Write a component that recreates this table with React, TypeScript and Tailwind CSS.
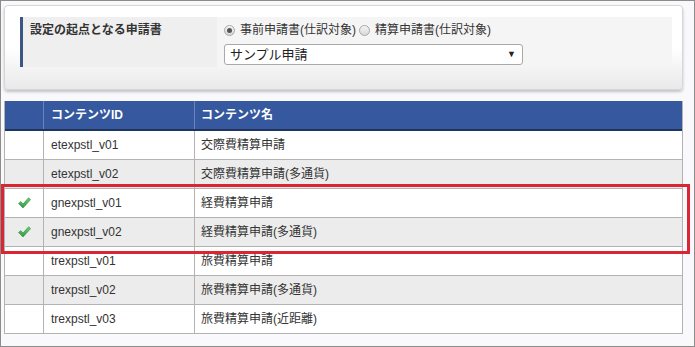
import React from "react";

const rows = [
  { id: "etexpstl_v01", name: "交際費精算申請", checked: false },
  { id: "etexpstl_v02", name: "交際費精算申請(多通貨)", checked: false },
  { id: "gnexpstl_v01", name: "経費精算申請", checked: true },
  { id: "gnexpstl_v02", name: "経費精算申請(多通貨)", checked: true },
  { id: "trexpstl_v01", name: "旅費精算申請", checked: false },
  { id: "trexpstl_v02", name: "旅費精算申請(多通貨)", checked: false },
  { id: "trexpstl_v03", name: "旅費精算申請(近距離)", checked: false },
];

function Check() {
  return (
    <svg width="13" height="12" viewBox="0 0 13 12">
      <defs>
        <linearGradient id="chk" x1="0" y1="0" x2="0" y2="1">
          <stop offset="0%" stopColor="#6fd07a" />
          <stop offset="100%" stopColor="#2e9a3e" />
        </linearGradient>
      </defs>
      <path
        d="M0.5 6.5 L2.8 4.6 L5 7 L10.6 0.8 L12.6 2.6 L5 11 Z"
        fill="url(#chk)"
        stroke="#2b8a38"
        strokeWidth="0.6"
        strokeLinejoin="round"
      />
    </svg>
  );
}

function Radio({ on }: { on: boolean }) {
  return (
    <span className="inline-flex h-[11px] w-[11px] items-center justify-center rounded-full border border-[#a8a8a8] bg-gradient-to-b from-[#f4f4f4] to-[#d9d9d9]">
      {on && <span className="h-[5px] w-[5px] rounded-full bg-[#555]" />}
    </span>
  );
}

export default function App() {
  return (
    <div
      className="relative box-border h-[347px] w-[695px] border border-[#8c8c8c] bg-[#f9f9fb] pl-[3px] pr-[11px] pt-[4px] text-[12px] text-[#333]"
      style={{ fontFamily: '"Liberation Sans", "Noto Sans CJK JP", sans-serif' }}
    >
      {/* condition panel */}
      <div className="box-border h-[85px] rounded-[4px] border border-[#d6d6d6] bg-gradient-to-b from-white via-white to-[#e9e9e9] pl-[15px] pr-[10px] pt-[11px] shadow-[0_2px_3px_rgba(0,0,0,0.22)]">
        <div className="flex h-[50px]">
          <div className="box-border w-[197px] border-l-[3px] border-[#3b5584] bg-[#efefef] pl-[7px] pt-[5px] font-bold leading-[16px]">
            設定の起点となる申請書
          </div>
          <div className="flex-1 bg-[#f5f5f5] pl-[7px] pt-[5px]">
            <div className="flex h-[16px] items-center leading-[16px]">
              <Radio on />
              <span className="ml-[5px]">事前申請書(仕訳対象)</span>
              <span className="ml-[3px] flex items-center">
                <Radio on={false} />
              </span>
              <span className="ml-[5px]">精算申請書(仕訳対象)</span>
            </div>
            <div className="mt-[6px] box-border flex h-[21px] w-[299px] items-center justify-between rounded-[3px] border border-[#a9a9a9] bg-white pl-[5px] pr-[6px] text-[13px] text-[#222]">
              <span>サンプル申請</span>
              <span className="text-[9px] text-[#222]">▼</span>
            </div>
          </div>
        </div>
      </div>

      {/* content table */}
      <div className="mt-[11px] border-x border-[#b3b3b3]">
        <div className="flex h-[30px] border-b-2 border-[#1f3560] bg-[#35589e] font-bold text-white">
          <div className="w-[39px] border-r border-[#6a84bb]" />
          <div className="flex w-[151px] items-center border-r border-[#6a84bb] pl-[7px]">
            コンテンツID
          </div>
          <div className="flex flex-1 items-center pl-[6px]">コンテンツ名</div>
        </div>
        {rows.map((r, i) => (
          <div
            key={r.id}
            className={`flex h-[29px] border-b border-[#b3b3b3] ${
              i % 2 === 1 ? "bg-[#ececec]" : "bg-white"
            }`}
          >
            <div className="flex w-[39px] items-center justify-center border-r border-[#b3b3b3]">
              {r.checked && <Check />}
            </div>
            <div className="flex w-[151px] items-center border-r border-[#b3b3b3] pl-[7px]">
              {r.id}
            </div>
            <div className="flex flex-1 items-center pl-[6px]">{r.name}</div>
          </div>
        ))}
      </div>

      {/* highlight */}
      <div className="absolute left-0 top-[183px] h-[70px] w-[689px] border-[3px] border-[#d92632]" />
    </div>
  );
}
